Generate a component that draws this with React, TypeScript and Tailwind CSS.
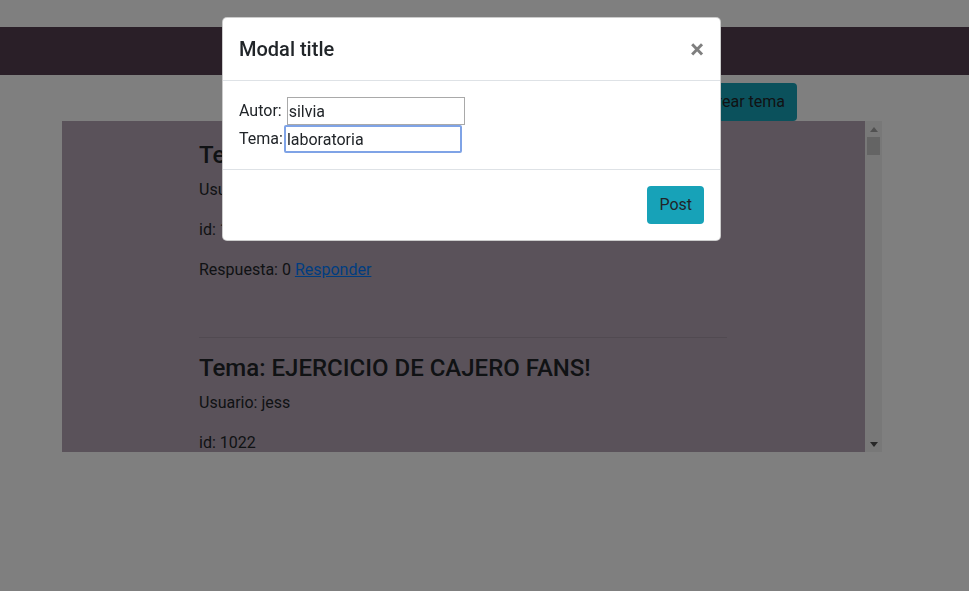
import React from 'react';

interface Topic {
  id: number;
  tema: string;
  usuario: string;
  respuestas: number;
}

const topics: Topic[] = [
  { id: 1021, tema: 'Tema: BIENVENIDAS A LA COMUNIDAD', usuario: 'silvia', respuestas: 0 },
  { id: 1022, tema: 'Tema: EJERCICIO DE CAJERO FANS!', usuario: 'jess', respuestas: 0 },
  { id: 1023, tema: 'Tema: dudas sobre el proyecto', usuario: 'ana', respuestas: 2 },
];

const TopicItem: React.FC<{ topic: Topic; first: boolean }> = ({ topic, first }) => (
  <div>
    {!first && <hr className="mt-[55px] mb-4 border-0 border-t border-black/10" />}
    <h4 className="text-2xl leading-[1.2] font-medium mb-2">{topic.tema}</h4>
    <p className="leading-6 mb-4">Usuario: {topic.usuario}</p>
    <p className="leading-6 mb-4">id: {topic.id}</p>
    <p className="leading-6 mb-4">
      Respuesta: {topic.respuestas}{' '}
      <a href="#" className="text-[#007bff] underline">
        Responder
      </a>
    </p>
  </div>
);

// scrollbar drawing (the screenshot tool hides native ones)
const ScrollBar = () => (
  <div className="w-[17px] shrink-0 flex flex-col bg-[#f1f1f1]">
    <div className="h-[16px] flex items-center justify-center">
      <svg width="8" height="5" viewBox="0 0 8 5">
        <polygon points="4,0 8,5 0,5" fill="#a3a3a3" />
      </svg>
    </div>
    <div className="mx-[2px] h-[18px] bg-[#c8c8c8]" />
    <div className="flex-1" />
    <div className="h-[16px] flex items-center justify-center">
      <svg width="8" height="5" viewBox="0 0 8 5">
        <polygon points="0,0 8,0 4,5" fill="#505050" />
      </svg>
    </div>
  </div>
);

export default function App() {
  return (
    <div className="min-h-screen bg-white text-[#212529] text-base font-['Roboto','Liberation_Sans',sans-serif]">
      <nav className="mt-[27px] h-12 bg-[#553f50]" />

      <div className="flex justify-end pr-[172px] pt-2">
        <button className="h-[38px] px-3 rounded-[4px] bg-[#17a2b8] text-[#212529] leading-6">
          Crear tema
        </button>
      </div>

      <div className="ml-[62px] w-[820px] h-[331px] flex bg-[#b5a5b5]">
        <div className="flex-1 overflow-hidden">
          <div className="ml-[137px] w-[528px] pt-5">
            {topics.map((t, i) => (
              <TopicItem key={t.id} topic={t} first={i === 0} />
            ))}
          </div>
        </div>
        <ScrollBar />
      </div>

      {/* modal */}
      <div className="fixed inset-0 bg-black/50">
        <div className="absolute left-[222px] top-[17px] w-[499px] rounded-[5px] bg-white border border-black/20">
          <div className="flex items-start justify-between p-4 border-b border-[#dee2e6]">
            <h5 className="text-xl leading-normal font-medium">Modal title</h5>
            <button className="-m-4 p-4 pt-[18px] ml-auto text-[26px] font-bold leading-none text-black opacity-50">
              ×
            </button>
          </div>
          <div className="p-4">
            <div className="flex items-center gap-[5px] h-[28px]">
              <span>Autor:</span>
              <input
                defaultValue="silvia"
                className="w-[178px] h-[28px] px-[1px] border border-[#a9a9a9] text-base font-[inherit] outline-none"
              />
            </div>
            <div className="flex items-center gap-[1px] h-[28px]">
              <span>Tema:</span>
              <input
                defaultValue="laboratoria"
                className="w-[178px] h-[28px] px-[1px] border-2 border-[#7fa3e6] rounded-[2px] text-base font-[inherit] outline-none"
              />
            </div>
          </div>
          <div className="flex justify-end items-center p-3 border-t border-[#dee2e6]">
            <button className="m-1 h-[38px] px-3 rounded-[4px] bg-[#17a2b8] text-[#212529] leading-6">
              Post
            </button>
          </div>
        </div>
      </div>
    </div>
  );
}
